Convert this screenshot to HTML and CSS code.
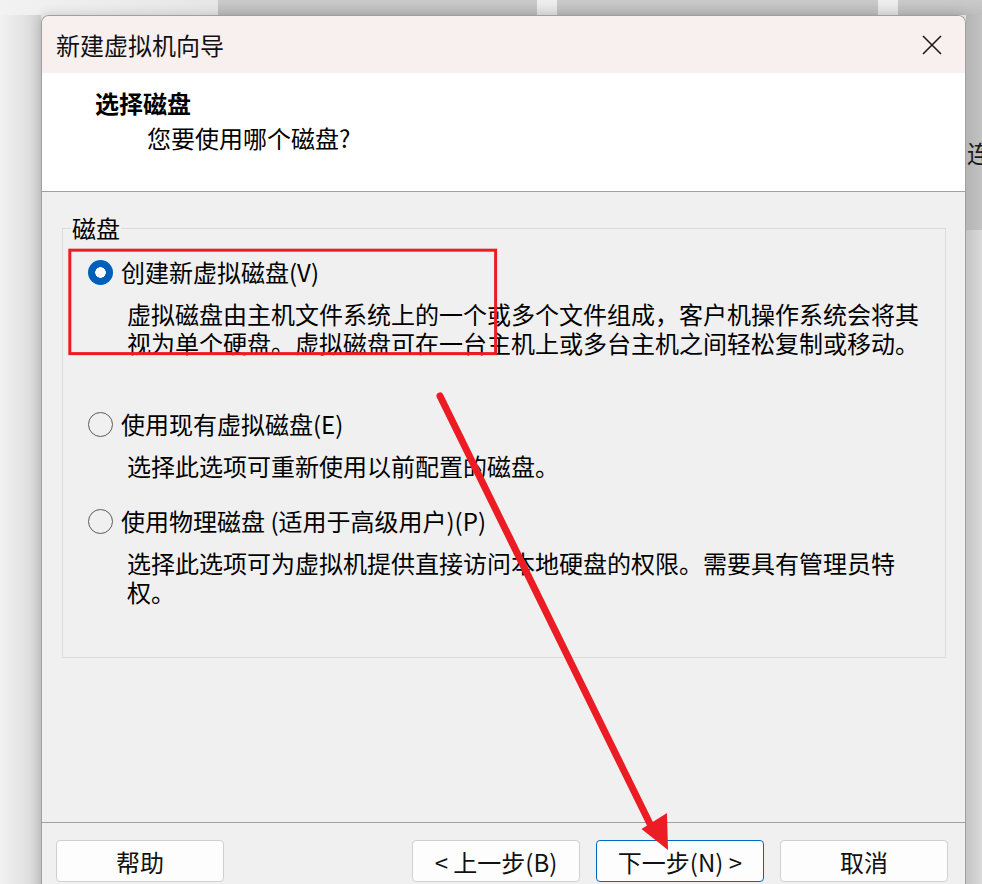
FILE: index.html
```html
<!DOCTYPE html>
<html lang="zh-CN">
<head>
    <meta charset="UTF-8">
    <meta name="viewport" content="width=device-width, initial-scale=1.0">
    <title>新建虚拟机向导</title>
    <link rel="stylesheet" href="styles.css">
</head>
<body>
    <div class="screen">
        <div class="top-strip">
            <div class="strip strip-light strip-a"></div>
            <div class="strip strip-dark strip-b"></div>
            <div class="strip strip-light strip-gap"></div>
            <div class="strip strip-dark strip-c"></div>
            <div class="strip strip-light strip-gap"></div>
            <div class="strip strip-dark strip-d"></div>
        </div>

        <div class="desk">
            <div class="desk-left"></div>

            <div class="dialog">
                <div class="titlebar">
                    <span class="title">新建虚拟机向导</span>
                    <svg class="close" width="20" height="20" viewBox="0 0 20 20">
                        <path d="M1 1 L19 19 M19 1 L1 19" stroke="#1b1b1b" stroke-width="1.6" fill="none"/>
                    </svg>
                </div>

                <div class="header">
                    <div class="header-title">选择磁盘</div>
                    <div class="header-sub">您要使用哪个磁盘?</div>
                </div>

                <div class="body">
                    <fieldset class="group">
                        <legend>磁盘</legend>

                        <div class="option option-first">
                            <div class="option-row">
                                <span class="radio checked"></span>
                                <span class="option-label">创建新虚拟磁盘(V)</span>
                            </div>
                            <p class="option-desc">虚拟磁盘由主机文件系统上的一个或多个文件组成，客户机操作系统会将其视为单个硬盘。虚拟磁盘可在一台主机上或多台主机之间轻松复制或移动。</p>
                        </div>

                        <div class="option">
                            <div class="option-row">
                                <span class="radio"></span>
                                <span class="option-label">使用现有虚拟磁盘(E)</span>
                            </div>
                            <p class="option-desc">选择此选项可重新使用以前配置的磁盘。</p>
                        </div>

                        <div class="option">
                            <div class="option-row">
                                <span class="radio"></span>
                                <span class="option-label">使用物理磁盘 (适用于高级用户)(P)</span>
                            </div>
                            <p class="option-desc">选择此选项可为虚拟机提供直接访问本地硬盘的权限。需要具有管理员特权。</p>
                        </div>
                    </fieldset>
                </div>

                <div class="footer">
                    <button class="btn">帮助</button>
                    <div class="footer-right">
                        <button class="btn">&lt; 上一步(B)</button>
                        <button class="btn btn-default">下一步(N) &gt;</button>
                        <button class="btn">取消</button>
                    </div>
                </div>
            </div>

            <div class="desk-right">
                <div class="desk-right-top">
                    <span class="peek">连</span>
                </div>
                <div class="desk-right-bottom"></div>
            </div>
        </div>

        <!-- red annotation marks drawn over the dialog -->
        <svg class="marks" width="982" height="884" viewBox="0 0 982 884">
            <rect x="69.8" y="250.2" width="425.8" height="103.4" fill="none" stroke="#ec1c24" stroke-width="3"/>
            <line x1="440" y1="396" x2="653" y2="830" stroke="#ec1c24" stroke-width="7" stroke-linecap="round"/>
            <polygon points="641.5,829 667,813 668,850" fill="#ec1c24"/>
        </svg>
    </div>
</body>
</html>
```

FILE: styles.css
```css
* {
    box-sizing: border-box;
}

body {
    margin: 0;
    background: #efefef;
    font-family: "Noto Sans CJK SC", "Microsoft YaHei", sans-serif;
    color: #000;
}

.screen {
    position: relative;
    width: 982px;
    height: 884px;
    overflow: hidden;
    background: #efefef;
}

/* windows peeking out behind the dialog */
.top-strip {
    display: flex;
    height: 15px;
}

.strip-light {
    background: linear-gradient(180deg, #eeeeee 0%, #e2e2e2 100%);
}

.strip-dark {
    background: linear-gradient(180deg, #cacaca 0%, #bdbdbd 100%);
}

.strip-a {
    width: 218px;
    background: linear-gradient(90deg, #f2f2f2 0%, #e6e6e6 100%);
}

.strip-b {
    width: 319px;
}

.strip-gap {
    width: 20px;
}

.strip-c {
    width: 321px;
}

.strip-d {
    flex: 1;
}

.desk {
    display: flex;
    height: 869px;
}

.desk-left {
    width: 41px;
    background: linear-gradient(90deg, #f2f2f2 0%, #e4e4e4 55%, #d2d2d2 100%);
}

.desk-right {
    flex: 1;
    display: flex;
    flex-direction: column;
    overflow: hidden;
}

.desk-right-top {
    height: 215px;
    background: linear-gradient(90deg, #b4b4b4 0%, #c2c2c2 100%);
    padding-top: 123px;
}

.peek {
    display: block;
    font-size: 24px;
    line-height: 30px;
    white-space: nowrap;
    padding-left: 1px;
    color: #1a1a1a;
}

.desk-right-bottom {
    flex: 1;
    background: linear-gradient(90deg, #c4c4c4 0%, #dadada 100%);
}

/* dialog */
.dialog {
    width: 925px;
    height: 900px;
    border: 1px solid #a0a0a0;
    border-bottom: none;
    border-radius: 8px 8px 0 0;
    overflow: hidden;
    background: #f0f0f0;
    box-shadow: 0 0 12px rgba(0, 0, 0, 0.18);
}

.titlebar {
    display: flex;
    align-items: center;
    justify-content: space-between;
    height: 57px;
    padding: 0 23px 0 14px;
    background: #f7f0ef;
}

.title {
    font-size: 24px;
    line-height: 30px;
    color: #111;
}

.close {
    display: block;
}

.header {
    height: 119px;
    padding: 15px 0 0 53px;
    background: #fff;
    border-bottom: 1px solid #a0a0a0;
}

.header-title {
    font-size: 24px;
    line-height: 30px;
    font-weight: 700;
}

.header-sub {
    margin: 5px 0 0 52px;
    font-size: 24px;
    line-height: 30px;
}

.body {
    height: 630px;
    padding-top: 21px;
}

.group {
    margin: 0 19px 0 20px;
    padding: 14px 0 51px 0;
    border: 1px solid #dcdcdc;
    min-width: 0;
}

.group legend {
    margin-left: 8px;
    padding: 0 1px;
    font-size: 24px;
    line-height: 30px;
    color: #000;
}

.option {
    padding-left: 25px;
    margin-bottom: 26px;
}

.option:last-child {
    margin-bottom: 0;
}

.option-first {
    margin-bottom: 52px;
}

.option-row {
    display: flex;
    align-items: center;
    gap: 8px;
}

.radio {
    width: 25px;
    height: 25px;
    border-radius: 50%;
    border: 1.5px solid #5c5c5c;
    flex-shrink: 0;
}

.radio.checked {
    border: none;
    background: radial-gradient(circle, #fff 0, #fff 5px, #005fb8 5.5px);
}

.option-label {
    font-size: 24px;
    line-height: 30px;
}

.option-desc {
    margin: 12px 0 0 39px;
    width: 797px;
    font-size: 24px;
    line-height: 29px;
}

.footer {
    display: flex;
    justify-content: space-between;
    border-top: 1px solid #a0a0a0;
    padding: 17px 17px 0 14px;
}

.footer-right {
    display: flex;
    gap: 16px;
}

.btn {
    width: 168px;
    height: 42px;
    padding: 0;
    font-family: inherit;
    font-size: 24px;
    color: #111;
    background: #fdfdfd;
    border: 1px solid #d0d0d0;
    border-radius: 4px;
}

.btn-default {
    border-color: #0067c0;
}

.marks {
    position: absolute;
    top: 0;
    left: 0;
    pointer-events: none;
}
```
